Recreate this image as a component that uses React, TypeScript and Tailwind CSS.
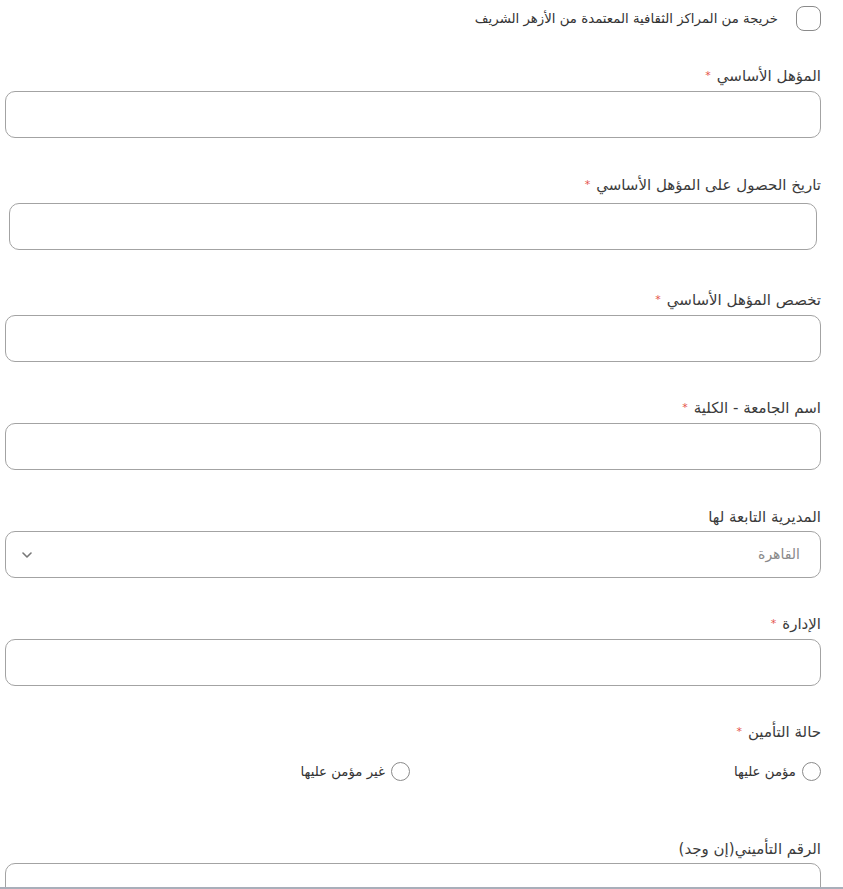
import React from 'react';

const font = { fontFamily: '"DejaVu Sans", sans-serif' };

function Label({ text, required }: { text: string; required?: boolean }) {
  return (
    <div className="text-[15px] leading-5 text-[#3b3b3b]">
      {text}
      {required && <span className="mr-1.5 align-top text-[11px] text-[#e5534b]">*</span>}
    </div>
  );
}

function TextInput() {
  return (
    <div className="h-[47px] w-full rounded-[10px] border border-[#a3a3a3] bg-white" />
  );
}

function Field({ label, required, className }: { label: string; required?: boolean; className: string }) {
  return (
    <div className={className}>
      <Label text={label} required={required} />
      <div className="mt-[5px]">
        <TextInput />
      </div>
    </div>
  );
}

export default function App() {
  return (
    <div dir="rtl" style={font} className="w-full bg-white pl-[5px] pr-[22px]">
      {/* graduate checkbox */}
      <div className="flex h-[37px] items-center gap-[18px]">
        <span className="block h-[25px] w-[25px] shrink-0 rounded-[8px] border border-[#8a8a8a]" />
        <span className="text-[13.3px] text-[#333]">خريجة من المراكز الثقافية المعتمدة من الأزهر الشريف</span>
      </div>

      <Field className="mt-[29px]" label="المؤهل الأساسي" required />

      <div className="mt-[37px]">
        <Label text="تاريخ الحصول على المؤهل الأساسي" required />
        <div className="mx-1 mt-[8px]">
          <TextInput />
        </div>
      </div>

      <Field className="mt-[40px]" label="تخصص المؤهل الأساسي" required />
      <Field className="mt-[36px]" label="اسم الجامعة - الكلية" required />

      <div className="mt-[37px]">
        <Label text="المديرية التابعة لها" />
        <div className="mt-[4px] flex h-[47px] w-full items-center justify-between rounded-[10px] border border-[#a3a3a3] bg-white pl-[16px] pr-[20px]">
          <span className="text-[14px] text-[#8a8a8a]">القاهرة</span>
          <svg width="10" height="6" viewBox="0 0 10 6" fill="none" stroke="#777" strokeWidth="1.6" strokeLinecap="round" strokeLinejoin="round">
            <path d="M1 1l4 4 4-4" />
          </svg>
        </div>
      </div>

      <Field className="mt-[36px]" label="الإدارة" required />

      <div className="mt-[36px]">
        <Label text="حالة التأمين" required />
        <div className="mt-[20px] grid grid-cols-2">
          <div className="flex items-center gap-[6px] text-[13.3px] text-[#333]">
            <span className="block h-[19px] w-[19px] rounded-full border border-[#8a8a8a]" />
            مؤمن عليها
          </div>
          <div className="flex items-center gap-[6px] text-[13.3px] text-[#333]">
            <span className="mr-[3px] block h-[19px] w-[19px] rounded-full border border-[#8a8a8a]" />
            غير مؤمن عليها
          </div>
        </div>
      </div>

      <div className="mt-[57px]">
        <Label text="الرقم التأميني(إن وجد)" />
        <div className="mt-[4px]">
          <TextInput />
        </div>
      </div>

      {/* bottom edge of the scroll panel */}
      <div className="fixed inset-x-0 bottom-0 h-[2px] bg-[#a9afba]" />
    </div>
  );
}
